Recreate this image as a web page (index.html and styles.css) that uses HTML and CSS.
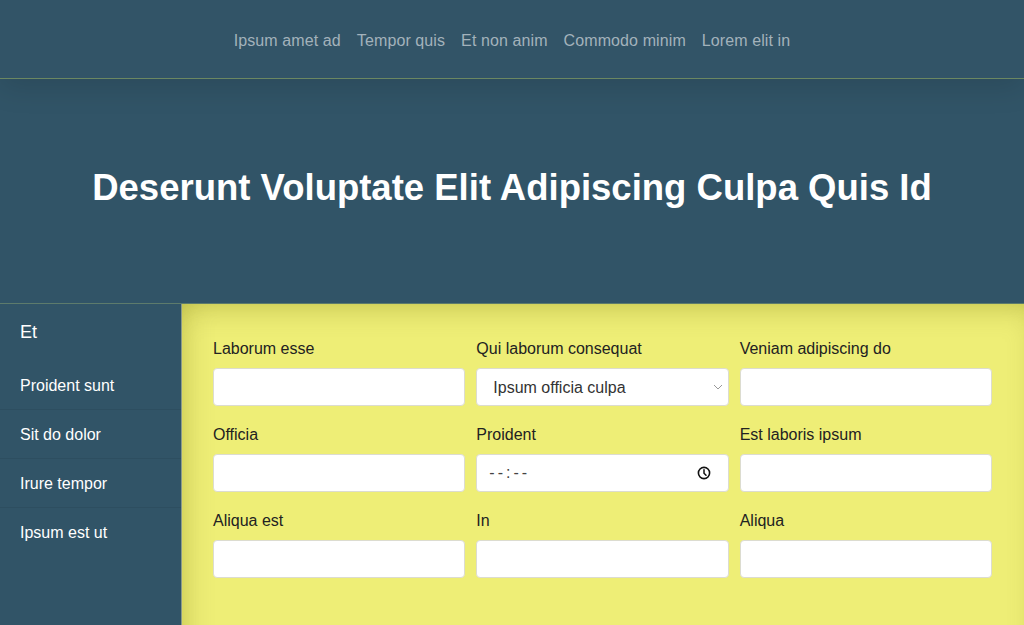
FILE: index.html
```html
<!DOCTYPE html>
<html lang="en">
<head>
<meta charset="utf-8">
<title>Form</title>
<link rel="stylesheet" href="styles.css">
</head>
<body>
<header class="topbar">
  <nav class="nav">
    <a href="#">Ipsum amet ad</a>
    <a href="#">Tempor quis</a>
    <a href="#">Et non anim</a>
    <a href="#">Commodo minim</a>
    <a href="#">Lorem elit in</a>
  </nav>
</header>
<section class="hero">
  <h1 class="hero-title">Deserunt Voluptate Elit Adipiscing Culpa Quis Id</h1>
</section>
<div class="body">
  <aside class="sidebar">
    <h2 class="side-title">Et</h2>
    <ul class="side-list">
      <li>Proident sunt</li>
      <li>Sit do dolor</li>
      <li>Irure tempor</li>
      <li>Ipsum est ut</li>
    </ul>
  </aside>
  <main class="main">
    <form class="grid">
      <div class="field">
        <label>Laborum esse</label>
        <input class="control" type="text">
      </div>
      <div class="field">
        <label>Qui laborum consequat</label>
        <div class="select-wrap">
          <select class="control select"><option>Ipsum officia culpa</option></select>
          <svg class="chev" width="10" height="6" viewBox="0 0 10 6"><path d="M1 1l4 4 4-4" fill="none" stroke="#999" stroke-width="1"/></svg>
        </div>
      </div>
      <div class="field">
        <label>Veniam adipiscing do</label>
        <input class="control" type="text">
      </div>
      <div class="field">
        <label>Officia</label>
        <input class="control" type="text">
      </div>
      <div class="field">
        <label>Proident</label>
        <div class="control time">
          <span class="time-text">--:--</span>
          <svg class="clock" width="14" height="14" viewBox="0 0 14 14"><circle cx="7" cy="7" r="5.6" fill="none" stroke="#111" stroke-width="1.6"/><path d="M7 3.8V7.2l2 2" fill="none" stroke="#111" stroke-width="1.5" stroke-linecap="round"/></svg>
        </div>
      </div>
      <div class="field">
        <label>Est laboris ipsum</label>
        <input class="control" type="text">
      </div>
      <div class="field">
        <label>Aliqua est</label>
        <input class="control" type="text">
      </div>
      <div class="field">
        <label>In</label>
        <input class="control" type="text">
      </div>
      <div class="field">
        <label>Aliqua</label>
        <input class="control" type="text">
      </div>
    </form>
  </main>
</div>
</body>
</html>
```
FILE: styles.css
```css
* { box-sizing: border-box; }
html, body { margin: 0; padding: 0; }
body {
  font-family: "Liberation Sans", Arial, sans-serif;
  background: #315467;
  color: #222;
  height: 625px;
  overflow: hidden;
}
.topbar {
  position: relative;
  z-index: 2;
  height: 79px;
  background: #325467;
  border-bottom: 1px solid #6b8762;
  box-shadow: 0 8px 30px rgba(0,0,0,0.12);
  display: flex;
  align-items: center;
  justify-content: center;
}
.nav {
  display: flex;
  gap: 16px;
  padding-top: 3px;
}
.nav a {
  color: #a3b2bb;
  text-decoration: none;
  font-size: 16px;
  letter-spacing: 0.1px;
}
.hero {
  height: 225px;
  background: #315467;
  display: flex;
  align-items: center;
  justify-content: center;
  border-bottom: 1px solid #5d7b6c;
}
.hero-title {
  margin: 0;
  color: #fff;
  font-size: 36.5px;
  font-weight: 700;
  padding-bottom: 6px;
}
.body {
  display: flex;
  height: 420px;
}
.sidebar {
  width: 182px;
  flex: none;
  background: #315467;
  border-right: 1px solid #8a9a8a;
  color: #fff;
}
.side-title {
  margin: 0;
  font-size: 18px;
  font-weight: 400;
  padding: 18px 20px 0;
  height: 57px;
}
.side-list {
  list-style: none;
  margin: 0;
  padding: 0;
}
.side-list li {
  font-size: 16px;
  height: 49px;
  padding: 16px 20px 0;
  border-bottom: 1px solid #2d4e60;
}
.side-list li:last-child { border-bottom: none; }
.main {
  flex: 1;
  background: #eeee76;
  box-shadow: inset 0 16px 30px -14px rgba(110,110,0,0.3), inset 16px 0 30px -14px rgba(110,110,0,0.25);
  padding: 33px 32px 0 31px;
}
.grid {
  display: grid;
  grid-template-columns: repeat(3, 1fr);
  column-gap: 11px;
}
.field {
  display: flex;
  flex-direction: column;
  margin-bottom: 17px;
}
.field label {
  font-size: 16px;
  line-height: 23px;
  color: #222;
  margin-bottom: 8px;
}
.control {
  height: 38px;
  width: 100%;
  background: #fff;
  border: 1px solid #dcdcd0;
  border-radius: 4px;
  font-family: inherit;
  font-size: 16px;
  color: #333;
  padding: 0 16px;
}
.select-wrap { position: relative; }
.select {
  appearance: none;
  -webkit-appearance: none;
  outline: none;
}
.chev {
  position: absolute;
  right: 6px;
  top: 16px;
}
.time {
  display: flex;
  align-items: center;
  justify-content: space-between;
  padding: 0 17px 0 12px;
}
.time-text {
  color: #444;
  font-size: 16px;
  letter-spacing: 3px;
}
```
